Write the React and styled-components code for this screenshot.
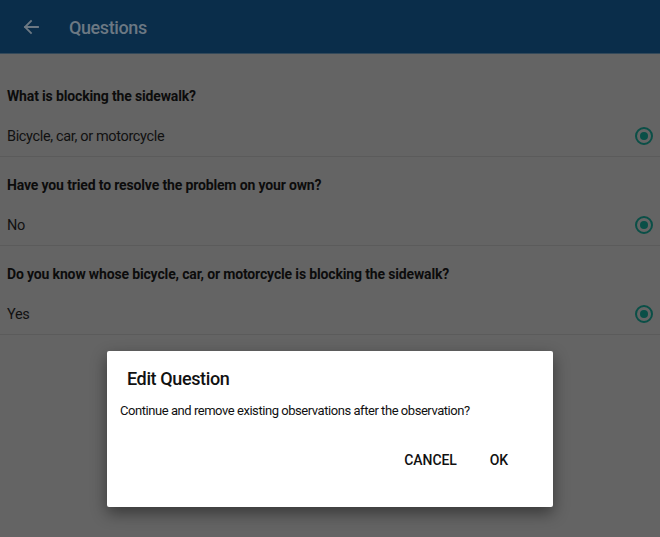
import React from "react";
import styled, { createGlobalStyle } from "styled-components";

const Global = createGlobalStyle`
  html, body { margin: 0; padding: 0; }
  body {
    width: 660px;
    height: 537px;
    overflow: hidden;
    background: #646464;
    font-family: Roboto, "Noto Sans", "Liberation Sans", sans-serif;
  }
`;

const Page = styled.div`
  position: relative;
  width: 660px;
  height: 537px;
  background: #646464;
`;

const AppBar = styled.header`
  height: 54px;
  background: #0a2d4a;
  border-bottom: 1px solid #33495a;
  display: flex;
  align-items: center;
  padding-left: 22px;
  box-sizing: border-box;
`;

const BackButton = styled.span`
  width: 18px;
  height: 18px;
  display: flex;
  align-items: center;
  justify-content: center;
  margin-right: 29px;
`;

const Title = styled.h1`
  margin: 0;
  font-size: 18px;
  letter-spacing: -0.4px;
  font-weight: 500;
  color: #6c7883;
  line-height: 1;
  padding-top: 2px;
`;

const List = styled.main`
  padding-top: 14px;
`;

const Item = styled.section`
  height: 89px;
  border-bottom: 1px solid #5b5b5b;
  padding-top: 18px;
  display: flex;
  flex-direction: column;
  box-sizing: border-box;
`;

const Question = styled.div`
  font-size: 14px;
  letter-spacing: -0.15px;
  font-weight: 700;
  color: #0c0c0c;
  line-height: 20px;
  padding-left: 7px;
`;

const AnswerRow = styled.div`
  margin-top: 10px;
  height: 40px;
  display: flex;
  align-items: center;
  justify-content: space-between;
  padding-left: 7px;
  padding-right: 7px;
`;

const Answer = styled.span`
  font-size: 14.5px;
  letter-spacing: -0.35px;
  color: #111;
`;

const Radio = styled.span`
  width: 14px;
  height: 14px;
  border: 2px solid #0a4f47;
  border-radius: 50%;
  display: flex;
  align-items: center;
  justify-content: center;
  &::after {
    content: "";
    width: 8px;
    height: 8px;
    border-radius: 50%;
    background: #0a4f47;
  }
`;

const Backdrop = styled.div`
  position: absolute;
  inset: 0;
  display: flex;
  align-items: flex-end;
  justify-content: center;
  padding-bottom: 30px;
  box-sizing: border-box;
`;

const Dialog = styled.div`
  width: 446px;
  height: 156px;
  background: #ffffff;
  border-radius: 2px;
  box-shadow: 0 6px 16px rgba(0, 0, 0, 0.45);
  display: flex;
  flex-direction: column;
  box-sizing: border-box;
`;

const DialogTitle = styled.h2`
  margin: 0;
  margin-top: 18px;
  padding-left: 20px;
  font-size: 18px;
  letter-spacing: -0.38px;
  font-weight: 500;
  line-height: 20px;
  color: #111;
`;

const DialogBody = styled.p`
  margin: 0;
  margin-top: 12px;
  padding-left: 13px;
  font-size: 13px;
  letter-spacing: -0.45px;
  line-height: 20px;
  color: #111;
`;

const Actions = styled.div`
  margin-top: 29px;
  display: flex;
  justify-content: flex-end;
  gap: 33px;
  padding-right: 45px;
`;

const ActionButton = styled.button`
  border: 0;
  background: none;
  padding: 0;
  font-family: inherit;
  font-size: 14px;
  font-weight: 500;
  line-height: 20px;
  color: #111;
  letter-spacing: -0.1px;
`;

const questions = [
  { q: "What is blocking the sidewalk?", a: "Bicycle, car, or motorcycle" },
  { q: "Have you tried to resolve the problem on your own?", a: "No" },
  {
    q: "Do you know whose bicycle, car, or motorcycle is blocking the sidewalk?",
    a: "Yes",
  },
];

export default function App() {
  return (
    <>
      <Global />
      <Page>
        <AppBar>
          <BackButton>
            <svg width="16" height="16" viewBox="0 0 16 16" fill="none">
              <path
                d="M15 8H2M8 2L2 8l6 6"
                stroke="#6c7883"
                strokeWidth="1.8"
                strokeLinecap="square"
              />
            </svg>
          </BackButton>
          <Title>Questions</Title>
        </AppBar>
        <List>
          {questions.map((item) => (
            <Item key={item.q}>
              <Question>{item.q}</Question>
              <AnswerRow>
                <Answer>{item.a}</Answer>
                <Radio />
              </AnswerRow>
            </Item>
          ))}
        </List>
        <Backdrop>
          <Dialog>
            <DialogTitle>Edit Question</DialogTitle>
            <DialogBody>
              Continue and remove existing observations after the observation?
            </DialogBody>
            <Actions>
              <ActionButton>CANCEL</ActionButton>
              <ActionButton>OK</ActionButton>
            </Actions>
          </Dialog>
        </Backdrop>
      </Page>
    </>
  );
}
